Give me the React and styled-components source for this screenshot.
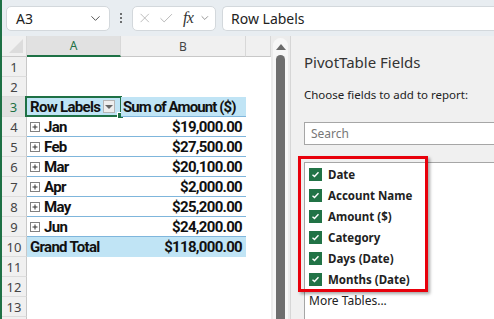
import styled, { createGlobalStyle, css } from "styled-components";
import { ChevronDown, X, Check } from "lucide-react";

const GlobalStyle = createGlobalStyle`
  html, body {
    margin: 0;
    padding: 0;
    width: 494px;
    height: 319px;
    overflow: hidden;
    background: #ffffff;
  }
`;

const SHEET_FONT = `"Roboto", "Liberation Sans", sans-serif`;
const UI_FONT = `"Noto Sans", "Open Sans", sans-serif`;

const Window = styled.div`
  width: 492px;
  height: 319px;
  border-left: 2px solid #1e7145;
  display: flex;
  flex-direction: column;
  overflow: hidden;
`;

const FormulaBar = styled.div`
  height: 36px;
  flex: none;
  background: #e8edf1;
  display: flex;
  align-items: center;
  gap: 4px;
  padding: 0 0 0 4px;
  font-family: ${UI_FONT};
`;

const Box = styled.div`
  height: 25px;
  box-sizing: border-box;
  background: #ffffff;
  border: 1px solid #d3d8dc;
  border-radius: 5px;
  display: flex;
  align-items: center;
  color: #222;
  font-size: 14px;
`;

const NameBox = styled(Box)`
  width: 104px;
  padding: 0 6px 0 9px;
  justify-content: space-between;
`;

const Dots = styled.div`
  width: 14px;
  display: flex;
  flex-direction: column;
  align-items: center;
  gap: 2px;

  span {
    width: 2px;
    height: 2px;
    background: #444;
    border-radius: 1px;
  }
`;

const FxBox = styled(Box)`
  width: 84px;
  padding: 0 4px;
  gap: 6px;
  color: #aaa;
  margin-right: 2px;
`;

const Fx = styled.span`
  font-family: "Liberation Serif", serif;
  font-style: italic;
  font-size: 16px;
  color: #333;
  margin-left: 2px;
  letter-spacing: -0.5px;
`;

const FormulaInput = styled(Box)`
  flex: 1;
  border-right: none;
  border-radius: 5px 0 0 5px;
  padding-left: 8px;
  font-size: 14px;
`;

const Main = styled.div`
  flex: 1;
  display: flex;
  min-height: 0;
`;

const Sheet = styled.div`
  width: 269px;
  flex: none;
  display: flex;
  flex-direction: column;
  font-family: ${SHEET_FONT};
  background: #fff;
`;

const Row = styled.div`
  display: grid;
  grid-template-columns: 25px 94px 125px 25px;
  height: ${(p) => p.$h || 20}px;
  flex: none;
`;

const Corner = styled.div`
  background: #f0f0f0;
  border-right: 1px solid #d8d8d8;
  border-bottom: 1px solid #c8c8c8;
  position: relative;

  &::after {
    content: "";
    position: absolute;
    right: 3px;
    bottom: 3px;
    border-left: 14px solid transparent;
    border-bottom: 14px solid #dcdcdc;
  }
`;

const ColHead = styled.div`
  background: ${(p) => (p.$active ? "#e1e1e1" : "#f0f0f0")};
  border-right: 1px solid #d8d8d8;
  border-bottom: ${(p) => (p.$active ? "2px solid #1e7145" : "1px solid #c8c8c8")};
  color: ${(p) => (p.$active ? "#1e7145" : "#444")};
  font-family: ${UI_FONT};
  font-size: 12px;
  display: flex;
  align-items: center;
  justify-content: center;
  box-sizing: border-box;
`;

const RowHead = styled.div`
  background: ${(p) => (p.$active ? "#e1e1e1" : "#f0f0f0")};
  border-right: ${(p) => (p.$active ? "2px solid #1e7145" : "1px solid #c8c8c8")};
  border-bottom: 1px solid #dcdcdc;
  color: ${(p) => (p.$active ? "#1e7145" : "#444")};
  font-family: ${UI_FONT};
  font-size: 13px;
  display: flex;
  align-items: center;
  justify-content: center;
  box-sizing: border-box;
`;

const Filler = styled.div`
  flex: 1;
  display: grid;
  grid-template-columns: 25px 1fr;

  &::before {
    content: "";
    background: #f0f0f0;
    border-right: 1px solid #c8c8c8;
  }
`;

const Cell = styled.div`
  box-sizing: border-box;
  display: flex;
  align-items: center;
  gap: 3px;
  padding: 0 4px 0 3px;
  font-weight: bold;
  font-size: 15px;
  letter-spacing: -0.7px;
  color: #111;
  white-space: nowrap;
  position: relative;
  justify-content: ${(p) => (p.$right ? "flex-end" : "flex-start")};

  ${(p) =>
    p.$kind === "head" &&
    css`
      background: #c0e4f5;
      border-bottom: 1px solid #7fb6dc;
    `}
  ${(p) =>
    p.$kind === "item" &&
    css`
      border-bottom: 1px solid #7fb6dc;
    `}
  ${(p) =>
    p.$kind === "total" &&
    css`
      background: #c0e4f5;
    `}
`;

const HeadText = styled.span`
  letter-spacing: -0.9px;
  margin-left: -1px;
`;

const Selection = styled.div`
  position: absolute;
  left: -2px;
  top: -1px;
  right: -1px;
  bottom: -1px;
  border: 2px solid #1e7145;
  pointer-events: none;

  &::after {
    content: "";
    position: absolute;
    right: -4px;
    bottom: -4px;
    width: 5px;
    height: 5px;
    background: #1e7145;
    border: 1px solid #fff;
  }
`;

const FilterButton = styled.div`
  margin-left: auto;
  margin-right: 2px;
  width: 12px;
  height: 11px;
  background: #eeeeee;
  border: 1px solid #b5b5b5;
  display: flex;
  align-items: center;
  justify-content: center;

  &::before {
    content: "";
    border-left: 4px solid transparent;
    border-right: 4px solid transparent;
    border-top: 4px solid #666;
  }
`;

const ExpandIcon = () => (
  <svg width="10" height="10" viewBox="0 0 10 10" style={{ flex: "none", marginRight: 1 }}>
    <rect x="0.5" y="0.5" width="9" height="9" fill="#fff" stroke="#808080" />
    <path d="M2.5 5h5M5 2.5v5" stroke="#333" strokeWidth="1" />
  </svg>
);

const Scroll = styled.div`
  width: 19px;
  flex: none;
  background: #ececec;
  border-right: 1px solid #d6d6d6;
  display: flex;
  justify-content: center;
`;

const Track = styled.div`
  width: 15px;
  margin-top: 2px;
  background: #f7f7f7;
  border-radius: 8px 8px 0 0;
  display: flex;
  flex-direction: column;
  align-items: center;
`;

const UpArrow = styled.div`
  margin-top: 6px;
  border-left: 5px solid transparent;
  border-right: 5px solid transparent;
  border-bottom: 6px solid #6b6b6b;
`;

const Thumb = styled.div`
  flex: 1;
  width: 9px;
  margin-top: 5px;
  background: #6e6e6e;
  border-radius: 5px 5px 0 0;
`;

const Panel = styled.div`
  flex: 1;
  background: #f0f0f0;
  font-family: ${UI_FONT};
  padding: 16px 0 0 13px;
  display: flex;
  flex-direction: column;
  position: relative;
`;

const Title = styled.div`
  font-size: 15px;
  color: #333;
  height: 20px;
  line-height: 20px;
`;

const Subtitle = styled.div`
  font-size: 11.5px;
  color: #222;
  margin-top: 15px;
  height: 16px;
  line-height: 16px;
`;

const Search = styled.div`
  margin-top: 19px;
  height: 23px;
  box-sizing: border-box;
  background: #fff;
  border: 1px solid #a6a6a6;
  border-right: none;
  font-size: 12px;
  color: #777;
  padding-left: 6px;
  display: flex;
  align-items: center;
`;

const FieldList = styled.div`
  margin-top: 17px;
  flex: 1;
  background: #fff;
  border: 1px solid #a6a6a6;
  border-right: none;
  border-bottom: none;
  padding: 1px 0 0 4px;
  display: flex;
  flex-direction: column;
`;

const Field = styled.div`
  height: 21px;
  flex: none;
  display: flex;
  align-items: center;
  gap: 6px;
  font-size: ${(p) => (p.$plain ? "12px" : "11.5px")};
  font-weight: ${(p) => (p.$plain ? "normal" : "bold")};
  color: #222;
`;

const CheckBox = () => (
  <svg width="13" height="13" viewBox="0 0 13 13" style={{ flex: "none" }}>
    <rect width="13" height="13" fill="#217346" />
    <path d="M3.5 6.8l2 1.8 4-4.3" fill="none" stroke="#fff" strokeWidth="1.4" />
  </svg>
);

const Highlight = styled.div`
  position: absolute;
  left: 7px;
  top: 120px;
  width: 130px;
  height: 136px;
  box-sizing: border-box;
  border: 3px solid #e8000b;
  box-shadow: 2px 2px 3px rgba(0, 0, 0, 0.35);
  pointer-events: none;
`;

const months = [
  ["Jan", "$19,000.00"],
  ["Feb", "$27,500.00"],
  ["Mar", "$20,100.00"],
  ["Apr", "$2,000.00"],
  ["May", "$25,200.00"],
  ["Jun", "$24,200.00"],
];

const fields = ["Date", "Account Name", "Amount ($)", "Category", "Days (Date)", "Months (Date)"];

export default function App() {
  return (
    <Window>
      <GlobalStyle />
      <FormulaBar>
        <NameBox>
          <span>A3</span>
          <ChevronDown size={15} strokeWidth={1.6} color="#555" />
        </NameBox>
        <Dots>
          <span />
          <span />
          <span />
        </Dots>
        <FxBox>
          <X size={16} strokeWidth={1.2} />
          <Check size={17} strokeWidth={1.2} />
          <Fx>fx</Fx>
          <ChevronDown size={12} strokeWidth={1.6} color="#777" />
        </FxBox>
        <FormulaInput>Row Labels</FormulaInput>
      </FormulaBar>

      <Main>
        <Sheet>
          <Row $h={21}>
            <Corner />
            <ColHead $active>A</ColHead>
            <ColHead>B</ColHead>
            <ColHead />
          </Row>
          <Row>
            <RowHead>1</RowHead>
            <Cell />
            <Cell />
            <Cell />
          </Row>
          <Row>
            <RowHead>2</RowHead>
            <Cell />
            <Cell />
            <Cell />
          </Row>
          <Row>
            <RowHead $active>3</RowHead>
            <Cell $kind="head">
              Row Labels
              <FilterButton />
              <Selection />
            </Cell>
            <Cell $kind="head">
              <HeadText>Sum of Amount ($)</HeadText>
            </Cell>
            <Cell />
          </Row>
          {months.map(([m, v], i) => (
            <Row key={m}>
              <RowHead>{i + 4}</RowHead>
              <Cell $kind="item">
                <ExpandIcon />
                {m}
              </Cell>
              <Cell $kind="item" $right>
                {v}
              </Cell>
              <Cell />
            </Row>
          ))}
          <Row>
            <RowHead>10</RowHead>
            <Cell $kind="total">Grand Total</Cell>
            <Cell $kind="total" $right>
              $118,000.00
            </Cell>
            <Cell />
          </Row>
          {[11, 12, 13].map((n) => (
            <Row key={n}>
              <RowHead>{n}</RowHead>
              <Cell />
              <Cell />
              <Cell />
            </Row>
          ))}
          <Filler />
        </Sheet>

        <Scroll>
          <Track>
            <UpArrow />
            <Thumb />
          </Track>
        </Scroll>

        <Panel>
          <Title>PivotTable Fields</Title>
          <Subtitle>Choose fields to add to report:</Subtitle>
          <Search>Search</Search>
          <FieldList>
            {fields.map((f) => (
              <Field key={f}>
                <CheckBox />
                {f}
              </Field>
            ))}
            <Field $plain>More Tables...</Field>
          </FieldList>
          <Highlight />
        </Panel>
      </Main>
    </Window>
  );
}
